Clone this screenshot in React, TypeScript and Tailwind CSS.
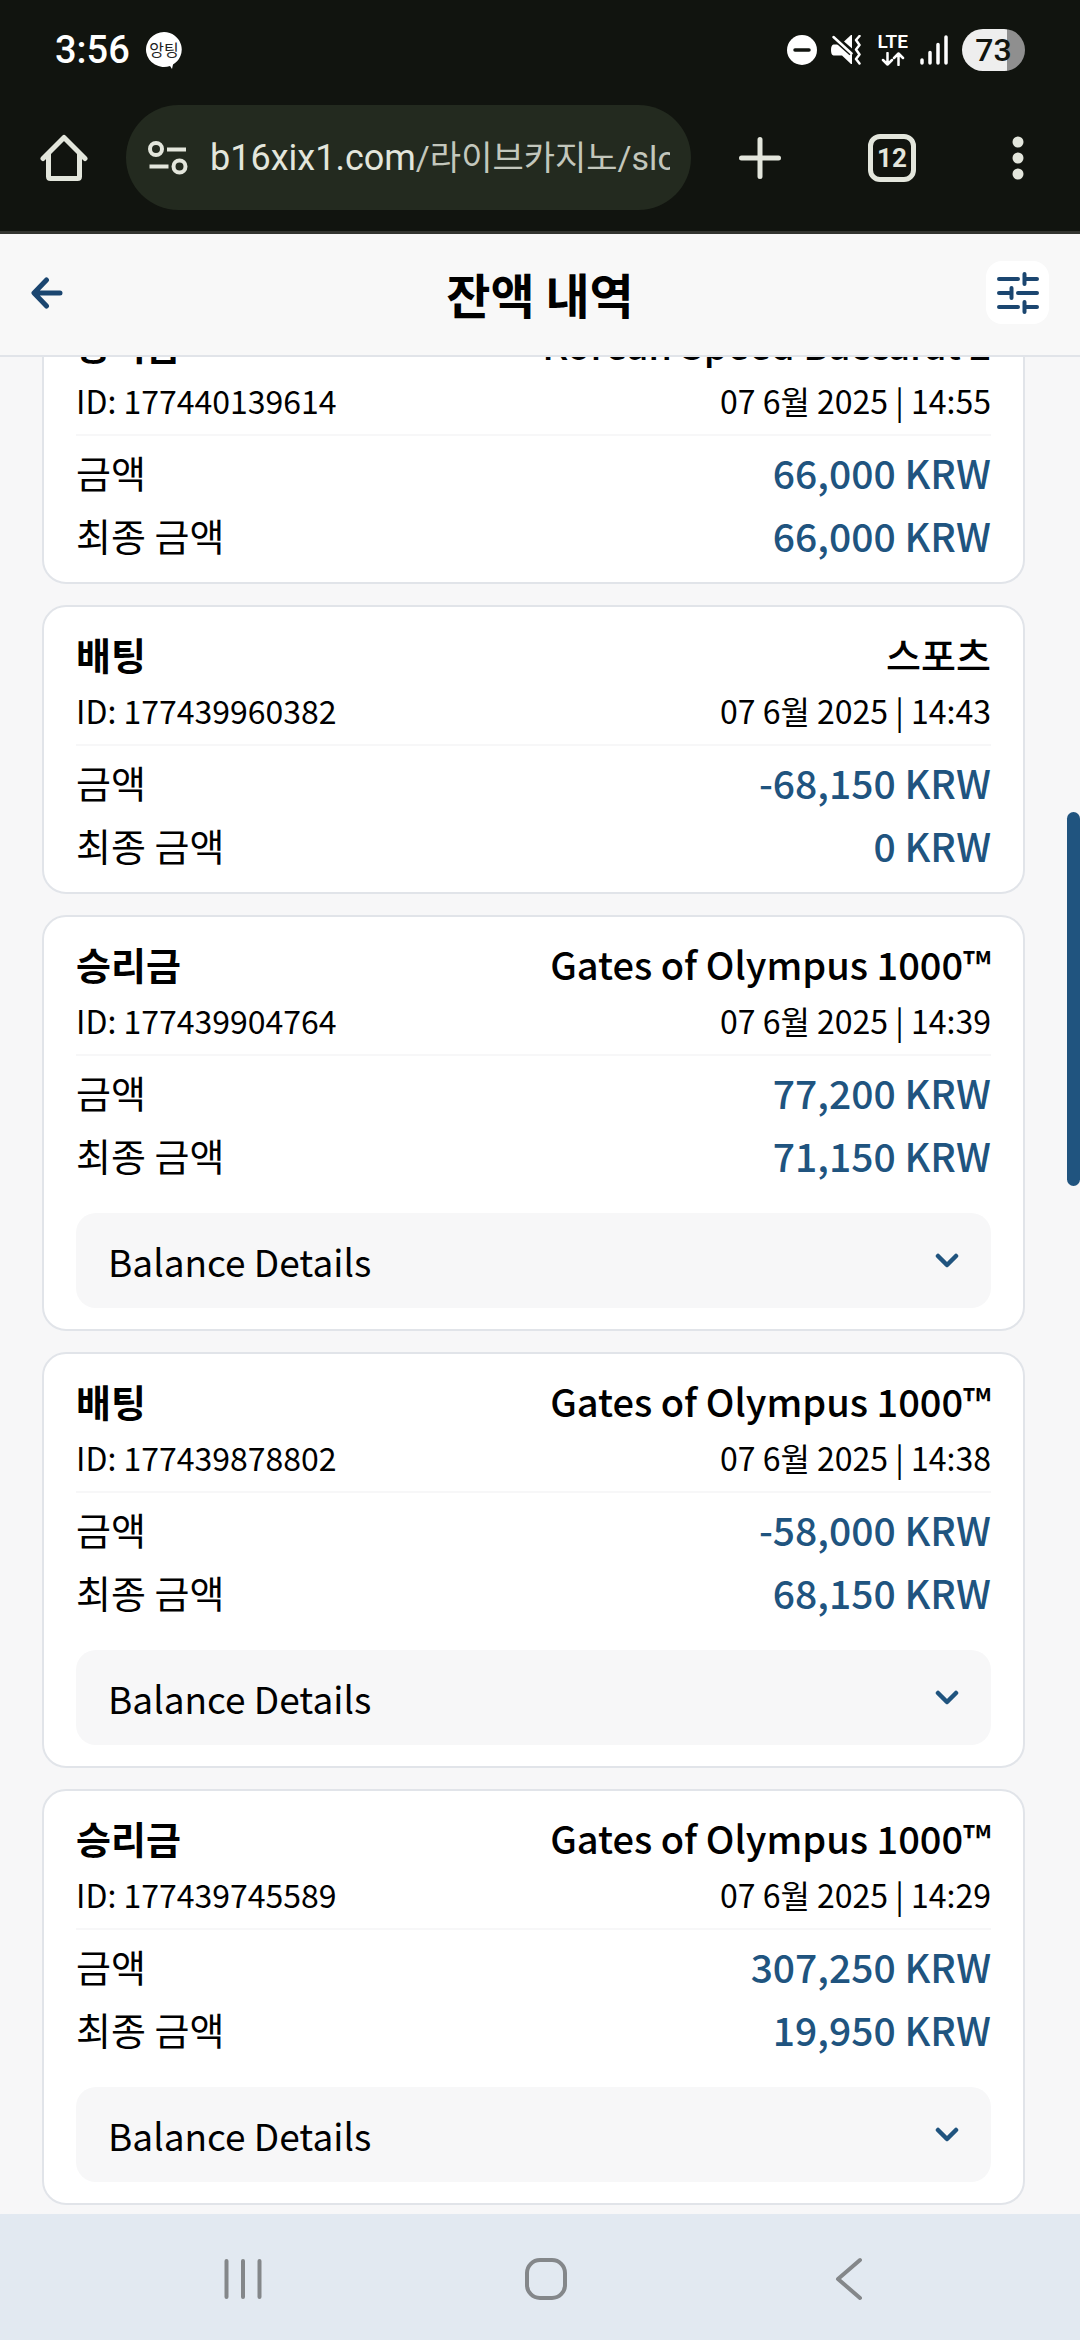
import React from "react";

type Transaction = {
  id: string;
  type: string;
  game: string;
  date: string;
  amount: string;
  total: string;
  hasDetails?: boolean;
};

const transactions: Transaction[] = [
  {
    id: "177440139614",
    type: "승리금",
    game: "Korean Speed Baccarat 2",
    date: "07 6월 2025 | 14:55",
    amount: "66,000 KRW",
    total: "66,000 KRW",
  },
  {
    id: "177439960382",
    type: "배팅",
    game: "스포츠",
    date: "07 6월 2025 | 14:43",
    amount: "-68,150 KRW",
    total: "0 KRW",
  },
  {
    id: "177439904764",
    type: "승리금",
    game: "Gates of Olympus 1000™",
    date: "07 6월 2025 | 14:39",
    amount: "77,200 KRW",
    total: "71,150 KRW",
    hasDetails: true,
  },
  {
    id: "177439878802",
    type: "배팅",
    game: "Gates of Olympus 1000™",
    date: "07 6월 2025 | 14:38",
    amount: "-58,000 KRW",
    total: "68,150 KRW",
    hasDetails: true,
  },
  {
    id: "177439745589",
    type: "승리금",
    game: "Gates of Olympus 1000™",
    date: "07 6월 2025 | 14:29",
    amount: "307,250 KRW",
    total: "19,950 KRW",
    hasDetails: true,
  },
];

const StatusBar = () => (
  <div className="flex h-[100px] items-center justify-between px-[55px] text-white">
    <div className="flex items-center gap-[15px]">
      <span className="text-[38px] leading-none font-medium">3:56</span>
      <svg width="38" height="38" viewBox="0 0 38 38" aria-hidden="true">
        <path
          d="M19 1a18 17.500 0 1 0 6 34l2 3 1-4.500A18 17.500 0 0 0 19 1z"
          fill="#fff"
        />
        <text
          x="19"
          y="25"
          textAnchor="middle"
          fontSize="16"
          fill="#222"
          fontFamily="Noto Sans CJK KR, sans-serif"
        >
          앙팅
        </text>
      </svg>
    </div>
    <div className="flex items-center">
      <svg width="30" height="30" viewBox="0 0 30 30" className="mr-[14px]">
        <circle cx="15" cy="15" r="15" fill="#fff" />
        <path d="M8 15h14" stroke="#11140f" strokeWidth="3.500" strokeLinecap="round" />
      </svg>
      <svg width="31" height="30" viewBox="0 0 31 30" className="mr-4" fill="#fff">
        <path d="M2.500 9.500h5L10 9l11 10.500v9.500L20 29l-9-8.500H2.500Q0 20 0 15t2.500-5.500z" />
        <path d="M13 6.500 20 0h1v13.500z" />
        <path
          d="M2 1.500 20.500 18"
          fill="none"
          stroke="#11140f"
          strokeWidth="6"
        />
        <path
          d="M2.500 2 20.500 18.500M28.500 1l-3.500 4 3.500 5-3.500 4.500 3.500 5-3.500 4.500 3.500 4.500"
          fill="none"
          stroke="#fff"
          strokeWidth="2.500"
          strokeLinecap="round"
          strokeLinejoin="round"
        />
      </svg>
      <div className="mr-3 flex flex-col items-center gap-[3px]">
        <span className="text-[19px] leading-[14px] font-semibold">LTE</span>
        <svg
          width="24"
          height="14"
          viewBox="0 0 24 14"
          fill="none"
          stroke="#fff"
          strokeWidth="2.500"
          strokeLinecap="round"
          strokeLinejoin="round"
        >
          <path d="M6.500 1v11.500M2 8l4.500 4.500L11 8M17.500 13V1.500M13 6l4.500-4.500L22 6" />
        </svg>
      </div>
      <svg
        width="28"
        height="30"
        viewBox="0 0 28 30"
        className="mr-[14px]"
        stroke="#fff"
        strokeWidth="3.500"
        strokeLinecap="round"
      >
        <path d="M2 25v3M10 17.500V28M18 9.500V28M26 2v26" />
      </svg>
      <div className="flex h-[42px] w-[63px] items-center justify-center rounded-full bg-linear-to-r from-[#eeeeee] from-72% to-[#8f8f8f] to-72% text-[32px] leading-none font-medium text-[#11140f]">
        73
      </div>
    </div>
  </div>
);

const BrowserBar = () => (
  <div className="flex h-[115px] items-center pl-10 pr-12 text-[#e3e6dc]">
    <button type="button" aria-label="Home" className="mr-[38px]">
      <svg width="48" height="48" viewBox="0 0 48 48" fill="none">
        <path
          d="M3 24.500 24 3.500l21 21M8.500 20v22.500q0 2 2 2h27q2 0 2-2V20"
          stroke="currentColor"
          strokeWidth="5"
          strokeLinecap="round"
          strokeLinejoin="round"
        />
      </svg>
    </button>
    <button
      type="button"
      className="mr-12 flex h-[105px] min-w-0 flex-1 items-center rounded-full bg-[#232a1f] pr-[21px] pl-[22px]"
    >
      <svg
        width="40"
        height="34"
        viewBox="0 0 40 34"
        fill="none"
        stroke="currentColor"
        strokeWidth="4"
        className="mr-[22px] shrink-0"
      >
        <circle cx="8" cy="8" r="6" />
        <path d="M19 8.500h19M1.500 25.500h19" />
        <circle cx="31.500" cy="25.500" r="6" />
      </svg>
      <span className="min-w-0 flex-1 overflow-hidden text-left text-[36px] leading-[48px] whitespace-nowrap">
        b16xix1.com
        <span className="text-[34px] text-[#c3c7bc]">/라이브카지노/slots</span>
      </span>
    </button>
    <button type="button" aria-label="New tab" className="mr-[87px]">
      <svg width="42" height="42" viewBox="0 0 42 42" fill="none">
        <path
          d="M21 2.500v37M2.500 21h37"
          stroke="currentColor"
          strokeWidth="5"
          strokeLinecap="round"
        />
      </svg>
    </button>
    <button
      type="button"
      className="mr-[88px] flex size-12 items-center justify-center rounded-xl border-5 border-current text-[26px] leading-none font-bold"
    >
      12
    </button>
    <button type="button" aria-label="Menu" className="flex w-7 justify-center">
      <svg width="12" height="44" viewBox="0 0 12 44" fill="currentColor">
        <circle cx="6" cy="6" r="5.500" />
        <circle cx="6" cy="22" r="5.500" />
        <circle cx="6" cy="38" r="5.500" />
      </svg>
    </button>
  </div>
);

const Header = () => (
  <header className="grid h-[123px] grid-cols-[63px_1fr_63px] items-center border-b-2 border-[#e1e4e9] bg-[#f8f8f8] px-[31px] pb-1 text-[#1b4670]">
    <button type="button" aria-label="Back">
      <svg width="32" height="32" viewBox="0 0 32 32" fill="none">
        <path
          d="M29 16H3.500M15.500 3 3 16l12.500 13"
          stroke="currentColor"
          strokeWidth="5"
          strokeLinecap="round"
          strokeLinejoin="round"
        />
      </svg>
    </button>
    <h1 className="text-center text-[48px] leading-[68px] font-bold text-black">
      잔액 내역
    </h1>
    <button
      type="button"
      aria-label="Filter"
      className="flex size-[63px] items-center justify-center rounded-2xl bg-white"
    >
      <svg
        width="42"
        height="42"
        viewBox="0 0 42 42"
        fill="none"
        stroke="currentColor"
        strokeWidth="4"
        strokeLinecap="round"
      >
        <path d="M2 7h19M27.500 2v10M27.500 7H40" />
        <path d="M2 21h12.500M14.500 16v10M21 21h19" />
        <path d="M2 35h19M27.500 30v10M27.500 35H40" />
      </svg>
    </button>
  </header>
);

type Props = {
  item: Transaction;
};

const Card = ({ item }: Props) => (
  <article className="rounded-3xl border-2 border-[#e1e4e9] bg-white px-8 py-[19px]">
    <div className="border-b-2 border-[#f7f7f8] pb-2">
      <div className="mb-0.5 flex justify-between text-[38px] leading-14">
        <h2 className="font-bold">{item.type}</h2>
        <span className="font-medium">{item.game}</span>
      </div>
      <div className="flex justify-between text-[32px] leading-[52px]">
        <span>ID: {item.id}</span>
        <time>{item.date}</time>
      </div>
    </div>
    <dl className="grid grid-cols-2 gap-y-[7px] pt-2 text-[38px] leading-14">
      <dt>금액</dt>
      <dd className="text-right text-[39px] font-medium text-[#20547f]">{item.amount}</dd>
      <dt>최종 금액</dt>
      <dd className="text-right text-[39px] font-medium text-[#20547f]">{item.total}</dd>
    </dl>
    {item.hasDetails && (
      <button
        type="button"
        className="mt-[30px] mb-0.5 flex h-[95px] w-full items-center justify-between rounded-[20px] bg-[#f7f7f8] px-8 text-[37px] leading-14"
      >
        Balance Details
        <svg width="24" height="16" viewBox="0 0 24 16" fill="none">
          <path
            d="m3 3 9 9 9-9"
            stroke="#20547f"
            strokeWidth="4.500"
            strokeLinecap="round"
            strokeLinejoin="round"
          />
        </svg>
      </button>
    )}
  </article>
);

const NavBar = () => (
  <nav className="grid h-[126px] shrink-0 grid-cols-3 items-center justify-items-center bg-[#e2e9f1] pt-1 pr-20 pl-[92px] text-[#84878a]">
    <button type="button" aria-label="Recent apps">
      <svg width="40" height="44" viewBox="0 0 40 44" fill="none">
        <path
          d="M3.500 4v36M20 4v36M36.500 4v36"
          stroke="currentColor"
          strokeWidth="4"
          strokeLinecap="round"
        />
      </svg>
    </button>
    <button type="button" aria-label="Home screen">
      <svg width="44" height="44" viewBox="0 0 44 44" fill="none">
        <rect
          x="3"
          y="3"
          width="38"
          height="38"
          rx="13"
          stroke="currentColor"
          strokeWidth="4"
        />
      </svg>
    </button>
    <button type="button" aria-label="Go back">
      <svg width="28" height="44" viewBox="0 0 28 44" fill="none">
        <path
          d="M25 3 3 22l22 19"
          stroke="currentColor"
          strokeWidth="4"
          strokeLinecap="round"
          strokeLinejoin="round"
        />
      </svg>
    </button>
  </nav>
);

const App = () => (
  <div className="flex h-screen flex-col overflow-hidden bg-[#f7f7f8] font-['Noto_Sans_CJK_KR',sans-serif] text-black">
    <div className="shrink-0 border-b-3 border-[#333530] bg-[#11140f] pb-4 font-['Roboto','Noto_Sans_CJK_KR',sans-serif]">
      <StatusBar />
      <BrowserBar />
    </div>
    <Header />
    <main className="relative min-h-0 flex-1 overflow-hidden">
      {/* list is scrolled, first card sits partly under the header */}
      <div className="-mt-[62px] flex flex-col gap-[21px] pr-[55px] pl-[42px]">
        {transactions.map((item) => (
          <Card key={item.id} item={item} />
        ))}
      </div>
      <div className="absolute top-[24.5%] right-0 h-[20.15%] w-[13px] rounded-full bg-[#20547f]" />
    </main>
    <NavBar />
  </div>
);

export default App;
